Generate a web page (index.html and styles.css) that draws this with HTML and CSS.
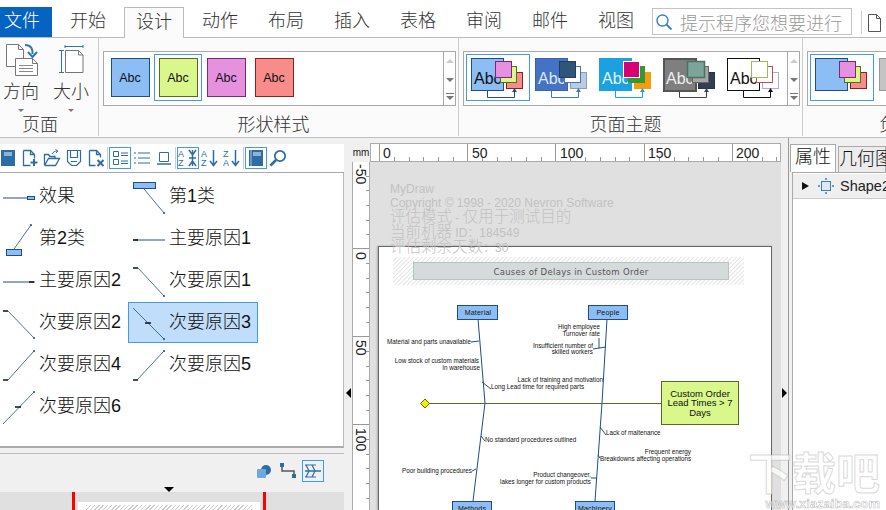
FILE: index.html
```html
<!DOCTYPE html>
<html lang="zh">
<head>
    <meta charset="UTF-8">
    <title>MyDraw</title>
    <link rel="stylesheet" href="styles.css">
</head>
<body>
    <div class="tabs">
        <div class="file-tab">文件</div>
        <div class="tab">开始</div>
        <div class="tab active">设计</div>
        <div class="tab">动作</div>
        <div class="tab">布局</div>
        <div class="tab">插入</div>
        <div class="tab">表格</div>
        <div class="tab">审阅</div>
        <div class="tab">邮件</div>
        <div class="tab">视图</div>
        <div class="search">
            <svg width="18" height="18" viewBox="0 0 18 18"><circle cx="7.5" cy="7.5" r="5.5" fill="none" stroke="#3a7fc0" stroke-width="1.4"/><path d="M11.5 11.5l5 5" stroke="#3a7fc0" stroke-width="1.8"/></svg>
            <span>提示程序您想要进行</span>
        </div>
        <div class="tab-sep"></div>
        <svg class="doc-icon" width="13" height="18" viewBox="0 0 13 18"><path d="M.5.5h8l4 4v13H.5z M8.5.5v4h4" fill="#fff" stroke="#555"/></svg>
    </div>

    <div class="ribbon">
        <div class="group page-group">
            <div class="big-buttons">
                <div class="big-btn">
                    <svg width="42" height="38" viewBox="0 0 42 38">
                        <path d="M6.5 2.5h12l5 5v17h-17z M18.5 2.5v5h5" fill="#fff" stroke="#777"/>
                        <path d="M15.5 16.5h17l5 5v12h-22z M32.5 16.5v5h5" fill="#fff" stroke="#777"/>
                        <path d="M19 23.5h14M19 26.5h14M19 29.5h14" stroke="#888"/>
                        <path d="M25 3c6 0 8 4 7.500 9" fill="none" stroke="#2e75b6" stroke-width="2"/>
                        <path d="M28 10l4.500 5 4.500-5" fill="none" stroke="#2e75b6" stroke-width="2"/>
                    </svg>
                    <span>方向</span>
                    <i class="caret"></i>
                </div>
                <div class="big-btn">
                    <svg width="42" height="38" viewBox="0 0 42 38">
                        <path d="M15.500 8.500h13l4.500 4.500v17.500h-17.500z M28.500 8.500v4.500h4.500" fill="#fff" stroke="#777"/>
                        <path d="M15 3v3M15 4.500h18M33 3v3M9 8.500h5M11.500 8.500v22M9 30.500h5" fill="none" stroke="#2e75b6"/>
                    </svg>
                    <span>大小</span>
                    <i class="caret"></i>
                </div>
            </div>
            <div class="group-label">页面</div>
        </div>

        <div class="group shape-group">
            <div class="gallery">
                <div class="swatch-item"><div class="swatch blue">Abc</div></div>
                <div class="swatch-item selected"><div class="swatch green">Abc</div></div>
                <div class="swatch-item"><div class="swatch pink">Abc</div></div>
                <div class="swatch-item"><div class="swatch red">Abc</div></div>
                <div class="scroll"><i class="up"></i><i class="down"></i><i class="more"></i></div>
            </div>
            <div class="group-label">形状样式</div>
        </div>

        <div class="group theme-group">
            <div class="gallery">
                <div class="theme-item selected">
                    <svg width="60" height="44" viewBox="0 0 60 44">
                        <rect x=".5" y=".5" width="32" height="32" fill="#8dbdf5" stroke="#1f4e82"/>
                        <text x="3" y="26" class="abc" fill="#111">Abc</text>
                        <rect x="35.500" y="14.500" width="16" height="16" fill="#f78c8a" stroke="#8a2020"/>
                        <rect x="29.500" y="8.500" width="16" height="16" fill="#d9f78a" stroke="#5a6b20"/>
                        <rect x="24.500" y="3.500" width="16" height="16" fill="#e691e0" stroke="#7a2a70"/>
                        <path d="M16.500 33v6.500h27V33" fill="none" stroke="#1f4e82"/><path d="M41 34l2.500-4 2.500 4z" fill="#1f4e82"/>
                    </svg>
                </div>
                <div class="theme-item">
                    <svg width="60" height="44" viewBox="0 0 60 44">
                        <rect x=".5" y=".5" width="32" height="32" fill="#4472c4" stroke="#3a62a8"/>
                        <text x="3" y="26" class="abc" fill="#dfe8f7">Abc</text>
                        <rect x="35.500" y="14.500" width="16" height="16" fill="#b8cce4" stroke="#8c9db5"/>
                        <rect x="29.500" y="8.500" width="16" height="16" fill="#fff" stroke="#4472c4"/>
                        <rect x="24.500" y="3.500" width="16" height="16" fill="#2f5677" stroke="#1f3f5c"/>
                        <path d="M16.500 33v6.500h27V33" fill="none" stroke="#4472c4"/><path d="M41 34l2.500-4 2.500 4z" fill="#4472c4"/>
                    </svg>
                </div>
                <div class="theme-item">
                    <svg width="60" height="44" viewBox="0 0 60 44">
                        <rect x=".5" y=".5" width="32" height="32" fill="#1ba1e2" stroke="#1ba1e2"/>
                        <text x="3" y="26" class="abc" fill="#e4f4fc">Abc</text>
                        <rect x="35.500" y="14.500" width="16" height="16" fill="#f59d0e" stroke="#f59d0e"/>
                        <rect x="29.500" y="8.500" width="16" height="16" fill="#339933" stroke="#339933"/>
                        <rect x="24.500" y="3.500" width="16" height="16" fill="#d80073" stroke="#fff"/>
                        <path d="M16.500 33v6.500h27V33" fill="none" stroke="#1ba1e2"/><path d="M41 34l2.500-4 2.500 4z" fill="#1ba1e2"/>
                    </svg>
                </div>
                <div class="theme-item">
                    <svg width="60" height="44" viewBox="0 0 60 44">
                        <rect x="1" y="1" width="32" height="32" fill="#7f7f7f" stroke="#555" stroke-width="2"/>
                        <text x="3" y="26" class="abc" fill="#eee">Abc</text>
                        <rect x="35.500" y="14.500" width="16" height="16" fill="#333f50" stroke="#2a3442"/>
                        <rect x="29.500" y="8.500" width="16" height="16" fill="#a6a6a6" stroke="#666"/>
                        <rect x="24.500" y="3.500" width="17" height="16" fill="#7ba598" stroke="#4f7060" stroke-width="1.500"/>
                        <path d="M16.500 33v6.500h27V33" fill="none" stroke="#444"/><path d="M41 34l2.500-4 2.500 4z" fill="#444"/>
                    </svg>
                </div>
                <div class="theme-item">
                    <svg width="60" height="44" viewBox="0 0 60 44">
                        <rect x=".5" y=".5" width="32" height="32" fill="#fff" stroke="#111"/>
                        <text x="3" y="26" class="abc" fill="#111">Abc</text>
                        <rect x="35.500" y="14.500" width="16" height="16" fill="#fff" stroke="#b4a7d6"/>
                        <rect x="29.500" y="8.500" width="16" height="16" fill="#fff" stroke="#c0504d"/>
                        <rect x="24.500" y="3.500" width="16" height="16" fill="#fff" stroke="#9bbb59"/>
                        <path d="M16.500 33v6.500h27V33" fill="none" stroke="#111"/><path d="M41 34l2.500-4 2.500 4z" fill="#111"/>
                    </svg>
                </div>
                <div class="scroll"><i class="up"></i><i class="down"></i><i class="more"></i></div>
            </div>
            <div class="group-label">页面主题</div>
        </div>

        <div class="group bg-group">
            <div class="gallery">
                <div class="theme-item selected">
                    <svg width="60" height="44" viewBox="0 0 60 44">
                        <rect x=".5" y=".5" width="32" height="32" fill="#8dbdf5" stroke="#1f4e82"/>
                        <rect x="35.500" y="14.500" width="16" height="16" fill="#f78c8a" stroke="#8a2020"/>
                        <rect x="29.500" y="8.500" width="16" height="16" fill="#d9f78a" stroke="#5a6b20"/>
                        <rect x="24.500" y="3.500" width="16" height="16" fill="#e691e0" stroke="#7a2a70"/>
                    </svg>
                </div>
                <div class="theme-item">
                    <svg width="60" height="44" viewBox="0 0 60 44"><rect x=".5" y=".5" width="32" height="32" fill="#c4c4c4" stroke="#999"/></svg>
                </div>
            </div>
            <div class="group-label clip">负</div>
        </div>
    </div>

    <div class="main">
        <div class="left-panel">
            <div class="toolbar">
                <div class="tool"><svg width="16" height="18" viewBox="0 0 16 18"><path d="M1 1h14v16H1z" fill="#2e6da4"/><path d="M4 3h8v4H4z" fill="#8db4d8"/></svg></div>
                <div class="tool"><svg width="18" height="18" viewBox="0 0 18 18"><path d="M2.500 1.500h7l4 4v4 M2.500 1.500v15h7 M9.500 1.500v4h4" fill="none" stroke="#2e6da4" stroke-width="1.300"/><path d="M13 10v7M9.500 13.500h7" stroke="#2e6da4" stroke-width="2"/></svg></div>
                <div class="tool"><svg width="18" height="18" viewBox="0 0 18 18"><path d="M1.500 16.500v-11h4l1.500 2h5v2 M1.500 16.500h11l4-7h-11l-4 7" fill="none" stroke="#2e6da4" stroke-width="1.300"/><path d="M9 5c1-2 3-3 5-3M12.500.5L15 2l-2 2" fill="none" stroke="#2e6da4"/></svg></div>
                <div class="tool"><svg width="16" height="18" viewBox="0 0 16 18"><path d="M1.500 1.500h13v11l-4 4h-5l-4-4z M4.500 1.500v7h7v-7 M5 12.500h6" fill="none" stroke="#2e6da4" stroke-width="1.200"/></svg></div>
                <div class="tool"><svg width="18" height="18" viewBox="0 0 18 18"><path d="M2.500 1.500h7l4 4v3 M2.500 1.500v15h6 M9.500 1.500v4h4" fill="none" stroke="#2e6da4" stroke-width="1.300"/><path d="M10.500 11l6 6M16.500 11l-6 6" stroke="#2e6da4" stroke-width="2"/></svg></div>
                <div class="sep"></div>
                <div class="tool on"><svg width="16" height="16" viewBox="0 0 16 16"><path d="M1.500 1.500h5v5h-5z M1.500 9.500h5v5h-5z" fill="none" stroke="#2e6da4"/><path d="M9 3h7M9 5.500h7M9 11h7M9 13.500h7" stroke="#2e6da4"/></svg></div>
                <div class="tool"><svg width="16" height="14" viewBox="0 0 16 14"><path d="M4 2h12M4 7h12M4 12h12" stroke="#2e6da4"/><path d="M0 2h2M0 7h2M0 12h2" stroke="#2e6da4"/></svg></div>
                <div class="tool"><svg width="14" height="14" viewBox="0 0 14 14"><path d="M2.500 1.500h9v9h-9z" fill="none" stroke="#2e6da4"/><path d="M0 13h14" stroke="#2e6da4" stroke-width="1.500"/></svg></div>
                <div class="sep"></div>
                <div class="tool on"><svg width="20" height="18" viewBox="0 0 20 18"><text x="0" y="8" class="az">A</text><text x="0" y="17" class="az">Z</text><path d="M11 1l3.500 5 3.500-5M11 9h7M11 17l3.500-5 3.500 5M14.500 1v16" fill="none" stroke="#2e6da4" stroke-width="1.500"/></svg></div>
                <div class="tool"><svg width="18" height="18" viewBox="0 0 18 18"><text x="0" y="8" class="az">A</text><text x="0" y="17" class="az">Z</text><path d="M12.500 1v15M9 12l3.500 4.500 3.500-4.500" fill="none" stroke="#2e6da4" stroke-width="1.500"/></svg></div>
                <div class="tool"><svg width="18" height="18" viewBox="0 0 18 18"><text x="0" y="8" class="az">Z</text><text x="0" y="17" class="az">A</text><path d="M12.500 1v15M9 12l3.500 4.500 3.500-4.500" fill="none" stroke="#2e6da4" stroke-width="1.500"/></svg></div>
                <div class="sep"></div>
                <div class="tool on"><svg width="16" height="18" viewBox="0 0 16 18"><path d="M1 1h14v16H1z" fill="#2e6da4"/><path d="M3 1v16" stroke="#a8c6e2"/><path d="M5 3h8v4H5z" fill="#8db4d8"/></svg></div>
                <div class="tool"><svg width="18" height="18" viewBox="0 0 18 18"><circle cx="11" cy="7" r="5.200" fill="none" stroke="#2e6da4" stroke-width="1.800"/><path d="M7 11l-5.500 5.500" stroke="#2e6da4" stroke-width="2.600"/></svg></div>
            </div>

            <div class="shapes">
                <div class="shape">
                    <svg width="42" height="40" viewBox="0 0 42 40"><path d="M6 21h24" stroke="#1f4e82"/><rect x="30.500" y="19.500" width="7" height="3" fill="#8dbdf5" stroke="#1f4e82"/></svg>
                    <span>效果</span>
                </div>
                <div class="shape">
                    <svg width="42" height="40" viewBox="0 0 42 40"><rect x="6.500" y="5.500" width="22" height="6" fill="#8dbdf5" stroke="#1f4e82"/><path d="M17 12l20 24" stroke="#1f4e82" stroke-width=".8"/><circle cx="37" cy="36" r="1" fill="#1f4e82"/></svg>
                    <span>第1类</span>
                </div>
                <div class="shape">
                    <svg width="42" height="40" viewBox="0 0 42 40"><rect x="9.500" y="30.500" width="15" height="6" fill="#8dbdf5" stroke="#1f4e82"/><path d="M17 30L34 6" stroke="#1f4e82" stroke-width=".8"/><circle cx="34" cy="6" r="1" fill="#1f4e82"/></svg>
                    <span>第2类</span>
                </div>
                <div class="shape">
                    <svg width="42" height="40" viewBox="0 0 42 40"><path d="M6 21h32" stroke="#1f4e82"/><path d="M6 21h5" stroke="#111" stroke-width="1.500"/></svg>
                    <span>主要原因1</span>
                </div>
                <div class="shape">
                    <svg width="42" height="40" viewBox="0 0 42 40"><path d="M6 21h32" stroke="#1f4e82"/><path d="M32 21h5" stroke="#111" stroke-width="1.500"/></svg>
                    <span>主要原因2</span>
                </div>
                <div class="shape">
                    <svg width="42" height="40" viewBox="0 0 42 40"><path d="M6 7h5" stroke="#111" stroke-width="1.500"/><path d="M11 7l26 28" stroke="#1f4e82" stroke-width=".8"/><circle cx="37" cy="35" r="1" fill="#1f4e82"/></svg>
                    <span>次要原因1</span>
                </div>
                <div class="shape">
                    <svg width="42" height="40" viewBox="0 0 42 40"><path d="M6 8h5" stroke="#111" stroke-width="1.500"/><path d="M11 8l26 27" stroke="#1f4e82" stroke-width=".8"/><circle cx="37" cy="35" r="1" fill="#1f4e82"/></svg>
                    <span>次要原因2</span>
                </div>
                <div class="shape selected">
                    <svg width="42" height="40" viewBox="0 0 42 40"><path d="M6 5l31 31" stroke="#1f4e82" stroke-width=".8"/><path d="M18 20h6" stroke="#111" stroke-width="1.500"/><circle cx="37" cy="36" r="1" fill="#1f4e82"/></svg>
                    <span>次要原因3</span>
                </div>
                <div class="shape">
                    <svg width="42" height="40" viewBox="0 0 42 40"><path d="M37 6L11 35" stroke="#1f4e82" stroke-width=".8"/><path d="M6 35h5" stroke="#111" stroke-width="1.500"/><circle cx="37" cy="6" r="1" fill="#1f4e82"/></svg>
                    <span>次要原因4</span>
                </div>
                <div class="shape">
                    <svg width="42" height="40" viewBox="0 0 42 40"><path d="M37 6L10 35" stroke="#1f4e82" stroke-width=".8"/><path d="M6 35h5" stroke="#111" stroke-width="1.500"/><circle cx="37" cy="6" r="1" fill="#1f4e82"/></svg>
                    <span>次要原因5</span>
                </div>
                <div class="shape">
                    <svg width="42" height="40" viewBox="0 0 42 40"><path d="M37 5L6 37" stroke="#1f4e82" stroke-width=".8"/><path d="M18 20h6" stroke="#111" stroke-width="1.500"/><circle cx="37" cy="5" r="1" fill="#1f4e82"/></svg>
                    <span>次要原因6</span>
                </div>
            </div>

            <div class="mini-tools">
                <svg width="16" height="14" viewBox="0 0 16 14"><circle cx="10" cy="6" r="5" fill="#2e6da4"/><rect x="1" y="5" width="9" height="9" rx="1" fill="#6fa8dc"/></svg>
                <svg width="18" height="16" viewBox="0 0 18 16"><rect x="1" y="0" width="4" height="4" fill="#2e6da4"/><rect x="13" y="11" width="4" height="4" fill="#2e6da4"/><path d="M3 4v4h12v3" fill="none" stroke="#555" stroke-width="1.500"/></svg>
                <div class="mini-on"><svg width="18" height="14" viewBox="0 0 18 14"><path d="M1 7h16" stroke="#2e6da4" stroke-width="1.500"/><path d="M2 1l3 6-3 6M8 1l3 6-3 6" fill="none" stroke="#2e6da4" stroke-width="1.200"/><path d="M1 1h6M1 13h6M7 1h5M7 13h5" stroke="#2e6da4"/></svg></div>
            </div>
            <div class="pager"><i></i></div>
            <div class="preview">
                <div class="preview-page"><div class="preview-band"></div></div>
            </div>
        </div>

        <div class="rail left-rail"><i class="arrow-left"></i></div>

        <div class="center">
            <div class="corner">mm</div>
            <div class="h-ruler">
                <svg width="411" height="17" viewBox="370 144 411 17">
                    <g class="ticks">
                        <path d="M379.500 144v17M467.500 144v17M555.500 144v17M644.500 144v17M732.500 144v17"/>
                        <path d="M394.500 157v4M409.500 157v4M423.500 157v4M438.500 157v4M453.500 157v4M482.500 157v4M497.500 157v4M511.500 157v4M526.500 157v4M541.500 157v4M570.500 157v4M585.500 157v4M600.500 157v4M615.500 157v4M629.500 157v4M659.500 157v4M674.500 157v4M688.500 157v4M703.500 157v4M718.500 157v4M747.500 157v4M762.500 157v4M776.500 157v4"/>
                    </g>
                    <text x="383" y="158" class="rule-num">0</text>
                    <text x="472" y="158" class="rule-num">50</text>
                    <text x="560" y="158" class="rule-num">100</text>
                    <text x="648" y="158" class="rule-num">150</text>
                    <text x="736" y="158" class="rule-num">200</text>
                </svg>
            </div>
            <div class="v-ruler">
                <svg width="18" height="348" viewBox="352 162 18 348">
                    <g class="ticks">
                        <path d="M352 248.500h18M352 336.500h18M352 424.500h18"/>
                        <path d="M366 176.500h4M366 190.500h4M366 205.500h4M366 220.500h4M366 234.500h4M366 263.500h4M366 278.500h4M366 292.500h4M366 307.500h4M366 322.500h4M366 351.500h4M366 366.500h4M366 380.500h4M366 395.500h4M366 410.500h4M366 439.500h4M366 454.500h4M366 468.500h4M366 483.500h4M366 498.500h4"/>
                    </g>
                    <text transform="translate(356 164) rotate(90)" class="rule-num">-50</text>
                    <text transform="translate(356 252) rotate(90)" class="rule-num">0</text>
                    <text transform="translate(356 340) rotate(90)" class="rule-num">50</text>
                    <text transform="translate(356 428) rotate(90)" class="rule-num">100</text>
                </svg>
            </div>
            <div class="canvas">
                <div class="eval">
                    <div>MyDraw</div>
                    <div>Copyright © 1998 - 2020 Nevron Software</div>
                    <div><span class="eval-cn">评估模式</span> - <span class="eval-cn">仅用于测试目的</span></div>
                    <div><span class="eval-cn">当前机器</span> ID：184549</div>
                    <div><span class="eval-cn">评估剩余天数</span>：30</div>
                </div>
                <div class="page">
                    <svg width="393" height="263" viewBox="379 247 393 263">
                        <defs>
                            <pattern id="hatch" width="3" height="3" patternUnits="userSpaceOnUse" patternTransform="rotate(45)">
                                <path d="M0 0v3" stroke="#c9c9c9"/>
                            </pattern>
                        </defs>
                        <rect x="393" y="257" width="351" height="28" fill="url(#hatch)"/>
                        <rect x="413.500" y="262.500" width="315" height="17" fill="#d5dadb" stroke="#b8c4c0"/>
                        <text x="571" y="274.500" class="title">Causes of Delays in Custom Order</text>

                        <g class="bones">
                            <path d="M478 319l7 84-12 98M607 319l-5 84-7 98"/>
                            <path d="M471 342l8-1M482 382l9 7M481 436l4 5M472 471l4-2M593 349l13-2M599 338v10M603 380l1-1M600 427l6 8M598 455l2 3M591 478h6"/>
                        </g>
                        <path d="M429 403.500h232" stroke="#5a6a20"/>
                        <path d="M425 399l4.500 4.500-4.500 4.500-4.500-4.500z" fill="#f5f000" stroke="#6a6a20"/>

                        <rect x="457.500" y="305.500" width="40" height="14" class="cat"/>
                        <text x="478" y="315" class="cat-text">Material</text>
                        <rect x="588.500" y="305.500" width="39" height="14" class="cat"/>
                        <text x="608" y="315" class="cat-text">People</text>
                        <rect x="452.500" y="501.500" width="39" height="14" class="cat"/>
                        <text x="472" y="511" class="cat-text">Methods</text>
                        <rect x="575.500" y="501.500" width="39" height="14" class="cat"/>
                        <text x="595" y="511" class="cat-text">Machinery</text>

                        <rect x="661.500" y="381.500" width="77" height="43" fill="#d9f78a" stroke="#5a6a20"/>
                        <text x="700" y="397" class="effect">Custom Order</text>
                        <text x="700" y="406" class="effect">Lead Times &gt; 7</text>
                        <text x="700" y="416" class="effect">Days</text>

                        <text x="471" y="344" class="lbl end">Material and parts unavailable</text>
                        <text x="479" y="363" class="lbl end">Low stock of custom materials</text>
                        <text x="480" y="370" class="lbl end">in warehouse</text>
                        <text x="603" y="382" class="lbl end">Lack of training and motivation</text>
                        <text x="491" y="389" class="lbl">Long Lead time for required parts</text>
                        <text x="600" y="329" class="lbl end">High employee</text>
                        <text x="600" y="336" class="lbl end">Turnover rate</text>
                        <text x="593" y="348" class="lbl end">Insufficient number of</text>
                        <text x="593" y="354" class="lbl end">skilled workers</text>
                        <text x="485" y="442" class="lbl">No standard procedures outlined</text>
                        <text x="472" y="473" class="lbl end">Poor building procedures</text>
                        <text x="591" y="477" class="lbl end">Product changeover,</text>
                        <text x="591" y="484" class="lbl end">lakes longer for custom products</text>
                        <text x="606" y="435" class="lbl">Lack of maitenance</text>
                        <text x="691" y="454" class="lbl end">Frequent energy</text>
                        <text x="600" y="461" class="lbl">Breakdowns affecting operations</text>
                    </svg>
                </div>
            </div>
        </div>

        <div class="rail right-rail"><i class="arrow-right"></i></div>

        <div class="right-panel">
            <div class="side-tabs">
                <div class="side-tab active">属性</div>
                <div class="side-tab">几何图</div>
            </div>
            <div class="tree">
                <div class="tree-row">
                    <i class="tree-arrow"></i>
                    <svg width="16" height="16" viewBox="0 0 16 16"><rect x="3.500" y="3.500" width="9" height="9" fill="#dce9f5" stroke="#3a7fc0"/><path d="M8 0v2M8 14v2M0 8h2M14 8h2" stroke="#3a7fc0" stroke-width="1.500"/></svg>
                    <span>Shape2</span>
                </div>
            </div>
        </div>
    </div>

    <div class="watermark">
        <div class="wm-cn">下载吧</div>
        <div class="wm-en">www.xiazaiba.com</div>
    </div>
</body>
</html>
```

FILE: styles.css
```css
* {
    box-sizing: border-box;
}
html, body {
    height: 100%;
}
body {
    margin: 0;
    width: 886px;
    height: 510px;
    overflow: hidden;
    position: relative;
    background-color: #f0f0f0;
    color: #333;
    font-family: "Liberation Sans", "Noto Sans CJK SC", sans-serif;
    font-size: 18px;
    font-weight: 300;
}

/* tabs */
.tabs {
    display: flex;
    align-items: flex-end;
    height: 38px;
    padding-top: 7px;
    background-color: #fff;
    border-bottom: 1px solid #bbb;
}
.file-tab {
    width: 52px;
    height: 30px;
    margin-right: 6px;
    padding-left: 4px;
    line-height: 29px;
    background-color: #0563c1;
    color: #fff;
}
.tab {
    width: 60px;
    height: 30px;
    margin-right: 6px;
    line-height: 29px;
    text-align: center;
}
.tab.active {
    height: 31px;
    margin-bottom: -1px;
    background-color: #fbfbfb;
    border: 1px solid #bbb;
    border-bottom: none;
}
.search {
    display: flex;
    align-items: center;
    gap: 7px;
    width: 200px;
    height: 27px;
    margin: 0 9px 2px 0;
    padding-left: 2px;
    background-color: #fff;
    border: 1px solid #c4c4c4;
    color: #999;
    white-space: nowrap;
    overflow: hidden;
}
.tab-sep {
    width: 1px;
    height: 23px;
    margin-bottom: 3px;
    background-color: #ccc;
}
.doc-icon {
    margin: 0 0 5px 6px;
}

/* ribbon */
.ribbon {
    display: flex;
    height: 100px;
    background-color: #fbfbfb;
    border-bottom: 1px solid #c0c0c0;
}
.group {
    display: flex;
    flex-direction: column;
    padding-top: 13px;
    border-right: 1px solid #ccc;
    margin-bottom: 1px;
}
.page-group {
    width: 99px;
}
.shape-group {
    width: 360px;
    padding-left: 4px;
}
.theme-group {
    width: 344px;
    padding-left: 4px;
}
.bg-group {
    flex: 1;
    min-width: 0;
    padding-left: 4px;
    border-right: none;
}
.group-label {
    height: 22px;
    margin-top: auto;
    padding-right: 14px;
    line-height: 22px;
    text-align: center;
    white-space: nowrap;
}
.group-label.clip {
    padding: 0 0 0 72px;
    text-align: left;
}
.big-buttons {
    display: flex;
    gap: 8px;
    height: 71px;
    margin-top: -9px;
}
.big-btn {
    display: flex;
    flex-direction: column;
    align-items: center;
    width: 42px;
}
.big-btn span {
    height: 24px;
    line-height: 24px;
    white-space: nowrap;
}
.caret {
    width: 0;
    height: 0;
    margin-top: 5px;
    border-left: 3px solid transparent;
    border-right: 3px solid transparent;
    border-top: 3px solid #777;
}
.page-group .group-label {
    padding-right: 18px;
}
.gallery {
    display: flex;
    height: 55px;
    width: 100%;
    padding: 2px 0 0 2px;
    background-color: #fff;
    border: 1px solid #aaa;
    overflow: hidden;
}
.bg-group .gallery {
    width: 100px;
}
.shape-group .gallery {
    width: 353px;
}
.theme-group .gallery {
    width: 337px;
}
.swatch-item {
    display: flex;
    align-items: center;
    justify-content: center;
    flex: none;
    width: 48px;
    height: 47px;
    border: 1px solid transparent;
}
.selected {
    border-color: #3d9bf0;
}
.swatch {
    width: 39px;
    height: 39px;
    line-height: 38px;
    text-align: center;
    font-size: 12.5px;
    font-weight: 400;
    color: #111;
    border: 1px solid;
}
.blue { background-color: #8dbdf5; border-color: #1f4e82; }
.green { background-color: #d9f78a; border-color: #5a6b20; }
.pink { background-color: #e691e0; border-color: #7a2a70; }
.red { background-color: #f78c8a; border-color: #8a2020; }
.theme-item {
    flex: none;
    width: 64px;
    height: 47px;
    padding: 3px 0 0 4px;
    border: 1px solid transparent;
}
.theme-item.selected {
    border-color: #3d9bf0;
}
.theme-item svg {
    display: block;
}
.abc {
    font-size: 16px;
    font-weight: 400;
}
.scroll {
    display: flex;
    flex-direction: column;
    align-items: center;
    justify-content: space-between;
    flex: none;
    width: 12px;
    height: 53px;
    margin: -2px 0 0 auto;
    padding: 7px 0 5px;
    border-left: 1px solid #aaa;
}
.scroll i {
    width: 0;
    height: 0;
    border-left: 4px solid transparent;
    border-right: 4px solid transparent;
}
.scroll .up {
    border-bottom: 4px solid #ccc;
}
.scroll .down {
    border-top: 4px solid #777;
}
.scroll .more {
    border-top: 4px solid #777;
    box-shadow: 0 -2px 0 0 #fff, 0 -3px 0 0 #777;
}

/* main area */
.main {
    display: flex;
    height: 372px;
}
.left-panel {
    display: flex;
    flex-direction: column;
    flex: none;
    width: 344px;
    padding-top: 6px;
}
.toolbar {
    display: flex;
    align-items: center;
    flex: none;
    height: 29px;
    padding: 0 0 1px;
    background-color: #fff;
    border-bottom: 1px solid #aaa;
    overflow: hidden;
}
.tool {
    display: flex;
    align-items: center;
    justify-content: center;
    flex: none;
    width: 22px;
    height: 22px;
    border: 1px solid transparent;
}
.toolbar .tool:first-child {
    margin-left: -3px;
}
.tool.on {
    border-color: #3d9bf0;
}
.az {
    font-size: 9px;
    font-weight: 400;
    fill: #2e6da4;
}
.sep {
    flex: none;
    width: 1px;
    height: 22px;
    margin-right: 1px;
    background-color: #ccc;
}
.shapes {
    display: grid;
    grid-template-columns: 130px 130px;
    grid-auto-rows: 42px;
    align-content: start;
    flex: none;
    height: 275px;
    padding: 3px 0 0 0;
    background-color: #fff;
    border-bottom: 2px solid #aaa;
    border-right: 1px solid #bbb;
}
.shapes .shape {
    display: flex;
    align-items: center;
    width: 130px;
    height: 41px;
    margin-left: -2px;
    color: #111;
    border: 1px solid transparent;
}
.shape svg {
    flex: none;
    margin-left: -2px;
}
.shape span {
    margin-bottom: 6px;
    white-space: nowrap;
}
.shape.selected {
    background-color: #c0defb;
    border-color: #3d9bf0;
}
.mini-tools {
    display: flex;
    align-items: center;
    justify-content: flex-end;
    flex: none;
    height: 34px;
    margin-top: 5px;
    padding: 0 20px 0 0;
    gap: 7px;
    border-top: 1px solid #bbb;
}
.mini-on {
    display: flex;
    align-items: center;
    justify-content: center;
    width: 22px;
    height: 22px;
    margin-left: -2px;
    border: 1px solid #3d9bf0;
}
.pager {
    display: flex;
    justify-content: center;
    flex: none;
    height: 4px;
    padding-right: 6px;
}
.pager i {
    width: 0;
    height: 0;
    border-left: 5px solid transparent;
    border-right: 5px solid transparent;
    border-top: 5px solid #000;
}
.preview {
    flex: 1;
    min-height: 0;
    margin-top: 1px;
    padding: 10px 0 0 78px;
    overflow: hidden;
    background-color: #e0e0e0;
    background-image:
        linear-gradient(#f00, #f00),
        linear-gradient(#f00, #f00);
    background-size: 3px 100%;
    background-position: 72px 0, 263px 0;
    background-repeat: no-repeat;
}
.preview-page {
    width: 182px;
    height: 8px;
    padding: 3px 8px 0;
    background-color: #fff;
}
.preview-band {
    height: 5px;
    background: repeating-linear-gradient(135deg, #ccc 0 1px, #fff 1px 3px);
}
.rail {
    flex: none;
    display: flex;
    padding-top: 250px;
}
.left-rail {
    width: 8px;
    justify-content: center;
}
.right-rail {
    width: 8px;
    background-color: #f0f0f0;
    border-right: 1px solid #999;
    justify-content: center;
}
.arrow-left {
    width: 0;
    height: 0;
    border-top: 5px solid transparent;
    border-bottom: 5px solid transparent;
    border-right: 5px solid #000;
}
.arrow-right {
    width: 0;
    height: 0;
    border-top: 5px solid transparent;
    border-bottom: 5px solid transparent;
    border-left: 5px solid #000;
}

/* rulers + drawing */
.center {
    display: grid;
    grid-template-columns: 18px 411px;
    grid-template-rows: 18px 1fr;
    flex: none;
    width: 429px;
    height: 372px;
    padding-top: 6px;
}
.corner {
    font-size: 10px;
    font-weight: 400;
    line-height: 18px;
    text-align: center;
    color: #222;
}
.h-ruler {
    height: 18px;
    background-color: #fff;
    border: 1px solid #aaa;
    border-width: 0 1px 1px 1px;
    box-shadow: 0 -1px 0 #aaa;
    overflow: hidden;
}
.h-ruler svg, .v-ruler svg {
    display: block;
    margin-left: -1px;
}
.v-ruler {
    height: 348px;
    background-color: #fff;
    border: 1px solid #aaa;
    border-width: 0 1px;
    overflow: hidden;
}
.ticks {
    fill: none;
    stroke: #999;
}
.rule-num {
    font-size: 14px;
    font-weight: 400;
    fill: #222;
}
.canvas {
    height: 348px;
    padding: 20px 0 0 8px;
    background-color: #e0e0e0;
    overflow: hidden;
}
.eval {
    height: 64px;
    padding-left: 12px;
    font-size: 12px;
    font-weight: 400;
    line-height: 14px;
    color: #c2c2c2;
    white-space: nowrap;
}
.eval-cn {
    font-size: 15.500px;
    font-weight: 300;
}
.page {
    width: 394px;
    height: 264px;
    background-color: #fff;
    border: 1px solid #666;
    border-width: 1px 1px 0 1px;
    box-shadow: -1px 0 2px #aaa;
    overflow: hidden;
}
.page svg {
    display: block;
}
.title {
    font-family: "DejaVu Sans", sans-serif;
    font-size: 8.500px;
    font-weight: 400;
    text-anchor: middle;
    fill: #555;
    letter-spacing: .3px;
}
.bones {
    fill: none;
    stroke: #1f4e82;
    stroke-width: 1;
}
.cat {
    fill: #8dbdf5;
    stroke: #1f4e82;
}
.cat-text {
    font-size: 7px;
    font-weight: 400;
    text-anchor: middle;
    fill: #111;
    letter-spacing: .2px;
}
.effect {
    font-size: 9.500px;
    font-weight: 400;
    text-anchor: middle;
    fill: #111;
}
.lbl {
    font-size: 6.300px;
    font-weight: 400;
    fill: #111;
}
.lbl.end {
    text-anchor: end;
}

/* properties */
.right-panel {
    flex: 1;
    min-width: 0;
    padding-top: 6px;
}
.side-tabs {
    display: flex;
    align-items: flex-end;
    height: 28px;
    white-space: nowrap;
    padding-left: 1px;
    overflow: hidden;
}
.side-tab {
    flex: none;
    width: 48px;
    height: 26px;
    line-height: 24px;
    margin-left: 2px;
    text-align: center;
    color: #111;
    background-color: #ececec;
    border: 1px solid #aaa;
    border-bottom: none;
}
.side-tab.active {
    width: 46px;
    height: 28px;
    margin-left: 0;
    background-color: #fff;
}
.tree {
    height: 338px;
    margin-left: 3px;
    background-color: #fff;
    border-left: 1px solid #aaa;
    border-top: 1px solid #aaa;
    overflow: hidden;
}
.tree-row {
    display: flex;
    align-items: center;
    height: 25px;
    margin-top: 1px;
    padding-left: 9px;
    font-size: 14.500px;
    font-weight: 400;
    color: #222;
    background-color: #efefef;
    border-bottom: 1px solid #ccc;
    white-space: nowrap;
}
.tree-row svg {
    flex: none;
    margin: 0 6px 0 9px;
}
.tree-arrow {
    flex: none;
    width: 0;
    height: 0;
    border-top: 4px solid transparent;
    border-bottom: 4px solid transparent;
    border-left: 7px solid #111;
}

/* site watermark over the shot */
.watermark {
    position: absolute;
    right: 6px;
    bottom: 0;
    width: 132px;
    text-align: right;
    pointer-events: none;
}
.wm-cn {
    font-size: 44px;
    font-weight: 700;
    line-height: 44px;
    color: rgba(255, 255, 255, .75);
    -webkit-text-stroke: 1px rgba(170, 170, 170, .45);
}
.wm-en {
    font-size: 13px;
    font-weight: 700;
    line-height: 13px;
    color: rgba(255, 255, 255, .75);
    -webkit-text-stroke: .5px rgba(130, 130, 130, .6);
}
```
